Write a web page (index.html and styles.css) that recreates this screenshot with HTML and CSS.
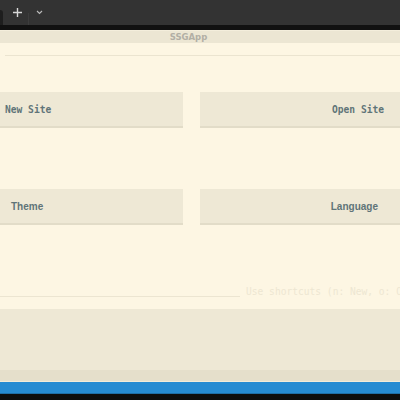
FILE: index.html
```html
<!DOCTYPE html>
<html>
<head>
<meta charset="utf-8">
<link rel="stylesheet" href="styles.css">
</head>
<body>
<div class="chrome">
  <div class="tab-edge"></div>
  <div class="tab-btn plus">
    <svg width="11" height="11" viewBox="0 0 11 11"><path d="M5.5 1v9M1 5.5h9" stroke="#d8d8d8" stroke-width="1.4" fill="none"/></svg>
  </div>
  <div class="tab-sep"></div>
  <div class="tab-btn chev">
    <svg width="7" height="5" viewBox="0 0 7 5"><path d="M1 1l2.5 2.5L6 1" stroke="#bbbbbb" stroke-width="1.1" fill="none"/></svg>
  </div>
</div>
<div class="chrome-border"></div>
<div class="titlebar"><span class="title">SSGApp</span></div>
<main class="app">
  <div class="rule"></div>
  <div class="grid row-one">
    <button class="btn btn-left mono">New Site</button>
    <button class="btn btn-right mono">Open Site</button>
  </div>
  <div class="grid row-two">
    <button class="btn btn-left sans theme">Theme</button>
    <button class="btn btn-right sans lang">Language</button>
  </div>
  <div class="hint-row">
    <div class="input-line"></div>
    <div class="hint">Use shortcuts (n: New, o: Open, t: Theme, l: Language)</div>
  </div>
  <div class="panel"></div>
  <div class="panel-foot"></div>
</main>
<div class="statusbar"></div>
<div class="bottom-black"></div>
</body>
</html>
```
FILE: styles.css
```css
html, body {
  margin: 0;
  padding: 0;
  width: 400px;
  height: 400px;
  overflow: hidden;
  background: #fdf6e3;
}
.chrome {
  height: 25px;
  background: #333333;
  display: flex;
  align-items: center;
}
.tab-edge {
  width: 3px;
  height: 15px;
  align-self: flex-end;
  background: #1e1e1e;
  border-top-right-radius: 3px;
}
.tab-btn {
  display: flex;
  align-items: center;
  justify-content: center;
}
.plus {
  width: 11px;
  height: 11px;
  margin-left: 9px;
}
.tab-sep {
  width: 1px;
  height: 12px;
  background: #3d3d3d;
  margin-left: 5px;
  align-self: flex-end;
  margin-bottom: 0;
}
.chev {
  margin-left: 7px;
  width: 7px;
  height: 5px;
}
.chrome-border {
  height: 5px;
  background: #111111;
}
.titlebar {
  height: 12px;
  background: #ece6d3;
  border-top: 1px solid #f4eedc;
  display: flex;
  justify-content: center;
  align-items: center;
  padding-right: 23px;
}
.title {
  font-family: "DejaVu Sans", sans-serif;
  font-weight: bold;
  font-size: 8.5px;
  color: #b2afa5;
  line-height: 12px;
}
.app {
  padding-top: 12px;
}
.rule {
  height: 1px;
  background: #ebe4d0;
  margin-left: 5px;
}
.grid {
  display: grid;
  grid-template-columns: 183px 200px;
  column-gap: 17px;
}
.row-one {
  margin-top: 36px;
}
.row-two {
  margin-top: 61px;
}
.btn {
  height: 36px;
  margin: 0;
  border: none;
  border-bottom: 2px solid #e2dcc8;
  background: #eee8d5;
  color: #5f7478;
  font-weight: bold;
  font-size: 9.6px;
  box-sizing: border-box;
  padding: 0;
  border-radius: 0;
}
.mono {
  font-family: "DejaVu Sans Mono", monospace;
}
.sans {
  font-family: "Liberation Sans", sans-serif;
  font-size: 10px;
}
.btn-left {
  text-align: left;
  padding-left: 5px;
}
.btn-right {
  text-align: right;
  padding-right: 16px;
}
.theme {
  padding-left: 11px;
}
.lang {
  padding-right: 22px;
}
.hint-row {
  margin-top: 64px;
  height: 8px;
  display: flex;
  align-items: flex-end;
  white-space: nowrap;
}
.input-line {
  width: 240px;
  flex: none;
  height: 1px;
  background: #ece5d1;
}
.hint {
  margin-left: 6px;
  font-family: "DejaVu Sans Mono", monospace;
  font-size: 9.6px;
  color: #ede6d2;
  line-height: 12px;
  transform: translateY(1px);
}
.panel {
  margin-top: 12px;
  height: 61px;
  background: #eee8d5;
}
.panel-foot {
  height: 11px;
  background: #e5dfcb;
  border-bottom: 1px solid #f1ebd9;
}
.statusbar {
  height: 11px;
  background: #268bd2;
  border-bottom: 1px solid #1f6fa6;
}
.bottom-black {
  height: 6px;
  background: #0d0d0d;
}
```
